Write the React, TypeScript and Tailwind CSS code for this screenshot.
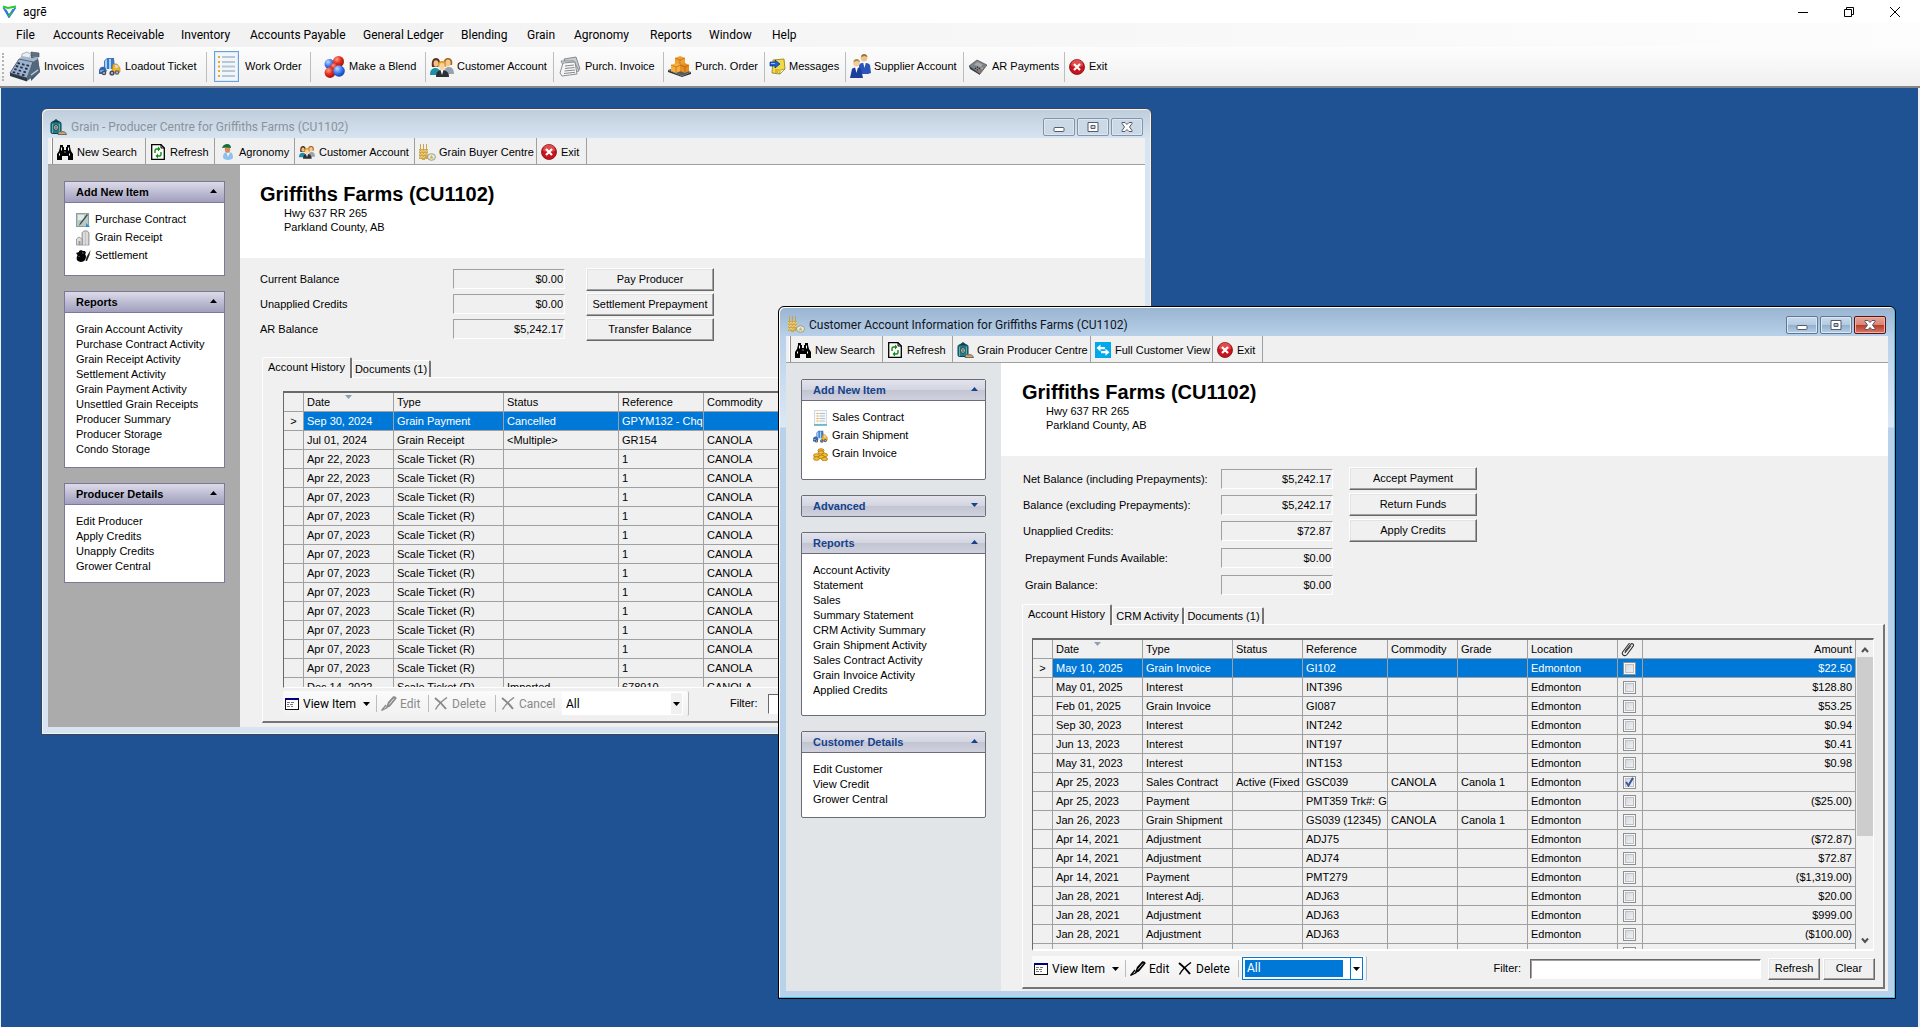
import React from "react";

type IconProps = { className?: string };

/* ---------- Icons ---------- */

function LogoIcon() {
  return (
    <svg width="15" height="13" viewBox="0 0 15 13" fill="none">
      <path d="M1.500 2.500 7 12l6.500-9.500" stroke="#2f7fe0" strokeWidth="1.800" />
      <path d="M4 4.500 7 10l4-6" stroke="#1b3fb8" strokeWidth=".8" />
      <path d="M1 1.500 6 3l8-1.500" stroke="#22d022" strokeWidth="2" />
      <path d="M6.500 11l3-3.500" stroke="#22d022" strokeWidth="1.500" />
    </svg>
  );
}

function RegisterIcon() {
  return (
    <svg width="32" height="31" viewBox="0 0 32 31">
      <path d="M22 1l8 1v4l-8-1z" fill="#5f7080" stroke="#3b4854" strokeWidth=".6" />
      <path d="M13 3l5-2 4 2-3 8-7-2z" fill="#e9eef3" stroke="#8896a3" strokeWidth=".7" />
      <path d="M22 5l7 2 2 14-9 9z" fill="#3f5568" />
      <path d="M10 8l14 3 5-3-2-2-4 1-10-2z" fill="#a4b8ca" />
      <path d="M1 22 10 8l14 3-6 16z" fill="#9db2cc" stroke="#3c4f66" strokeWidth=".8" />
      <path d="M1 22l17 5v3.500L1 25z" fill="#2c3846" />
      <path d="M18 27l6-16 5-2 2 12-13 9z" fill="#53687c" />
      <path d="M8.500 12l2.500.6M13 13.200l2.500.6M17.500 14.200l2.500.6M6.800 15l2.500.6M11.200 16.200l2.500.6M16 17.400l2.500.6M5.200 18l2.500.7M9.600 19.300l2.500.7M14.400 20.600l2.500.7M3.700 21l2.500.7M8 22.300l2.500.7M13 23.700l2.500.7" stroke="#22304c" strokeWidth="1.800" />
      <path d="M22 24l7-5" stroke="#c3d2df" strokeWidth="1.200" />
    </svg>
  );
}

function TruckIcon({ className = "w-[22px] h-[19px]" }: IconProps) {
  return (
    <svg className={className} viewBox="0 0 22 19">
      <path d="M5 4l3-3h7l1 11H5z" fill="#3a78c9" />
      <path d="M6 4l2-2v10H6zM10 2h2v10h-2z" fill="#a8d0f5" />
      <path d="M0 13c1-3 3-4 6-3l2 4-3 3H0z" fill="#3566b0" />
      <path d="M1 14h4" stroke="#bcd6f2" />
      <path d="M14 7h4l3 4v4l-5 1-3-2z" fill="#f3b229" stroke="#b47a12" strokeWidth=".6" />
      <path d="M16 8h2l1.500 2.500-3 .5z" fill="#cfe2f4" />
      <circle cx="5" cy="16" r="2.300" fill="#454f5c" />
      <circle cx="13" cy="16" r="2.600" fill="#454f5c" />
      <circle cx="18" cy="15.500" r="2.300" fill="#5a636e" />
      <circle cx="13" cy="16" r="1" fill="#c5cbd2" />
      <circle cx="5" cy="16" r=".9" fill="#c5cbd2" />
      <circle cx="18" cy="15.500" r=".9" fill="#c5cbd2" />
    </svg>
  );
}

function WorkOrderIcon() {
  return (
    <svg width="25" height="31" viewBox="0 0 25 31">
      <rect x=".5" y=".5" width="24" height="30" fill="#d9e9f9" stroke="#6f9fd8" />
      <rect x="2" y="2" width="21" height="27" fill="#f1f6fb" />
      <path d="M4 6h2M4 11h2M4 15.500h2M4 20h2M4 25h2" stroke="#f5a81c" strokeWidth="2" />
      <path d="M8 6h13M8 11h13M8 15.500h13M8 20h13M8 25h13" stroke="#b9c6d3" strokeWidth="2" />
    </svg>
  );
}

function BlendIcon() {
  return (
    <svg width="21" height="22" viewBox="0 0 21 22">
      <defs>
        <radialGradient id="ballRed" cx=".35" cy=".3" r=".8">
          <stop offset="0" stopColor="#ff9a86" />
          <stop offset=".5" stopColor="#e02a1a" />
          <stop offset="1" stopColor="#8f0d05" />
        </radialGradient>
        <radialGradient id="ballBlue" cx=".35" cy=".3" r=".8">
          <stop offset="0" stopColor="#b9dcff" />
          <stop offset=".5" stopColor="#3a78ee" />
          <stop offset="1" stopColor="#0d2fa0" />
        </radialGradient>
      </defs>
      <circle cx="5.500" cy="8" r="5" fill="url(#ballBlue)" />
      <circle cx="14.500" cy="5.500" r="5.500" fill="url(#ballRed)" />
      <circle cx="10.500" cy="11" r="4" fill="url(#ballRed)" />
      <circle cx="6" cy="16.500" r="5.400" fill="url(#ballRed)" />
      <circle cx="15" cy="15" r="5.800" fill="url(#ballBlue)" />
    </svg>
  );
}

function PeopleIcon({ className = "w-[24px] h-[20px]" }: IconProps) {
  return (
    <svg className={className} viewBox="0 0 24 20">
      <path d="M0 18c0-5 2-7 5.500-7S11 14 11 18z" fill="#1f8fa8" />
      <path d="M14 17c0-5 1.500-7 5-7s5 3 5 7z" fill="#9aa3ad" />
      <path d="M2 10C1 4 3 1 6 1s5 3 4 9z" fill="#5a3418" />
      <ellipse cx="6" cy="6.500" rx="2.400" ry="3.200" fill="#f0c090" />
      <path d="M14 8c-1-5 1-7 4-7s5 2 4 7z" fill="#a8661c" />
      <ellipse cx="18" cy="6" rx="2.600" ry="3.400" fill="#f3c898" />
      <path d="M6 20c0-5 2-7 6-7s7 2 7 7z" fill="#2b2f36" />
      <path d="M10.500 13l1.500 5 1.500-5z" fill="#fff" />
      <path d="M8 10c-1-4 1-6 4-6s5 2 4 6z" fill="#e0a030" />
      <ellipse cx="12" cy="9.500" rx="2.700" ry="3.400" fill="#f9d3a4" />
    </svg>
  );
}

function PapersIcon() {
  return (
    <svg width="22" height="21" viewBox="0 0 22 21">
      <path d="M5 3 17 1l4 12-12 5z" fill="#c9cdd0" stroke="#7d8287" strokeWidth=".9" />
      <path d="M2 5h13l5 10-12 2z" fill="#e4e6e8" stroke="#7d8287" strokeWidth=".9" />
      <path d="M4 7l12-1 2 12-15 2-2-3z" fill="#f6f6f6" stroke="#7d8287" strokeWidth=".9" />
      <path d="M6 10l9-1M6 12.500l9.500-1M5.500 15l10.500-1M5 17.500l11-1.200" stroke="#85898e" strokeWidth="1" />
    </svg>
  );
}

function BoxesIcon() {
  return (
    <svg width="24" height="21" viewBox="0 0 24 21">
      <path d="M0 14l14 6 9-4v2l-9 3L0 16z" fill="#30343a" />
      <path d="M0 14l9-3 14 5-9 4z" fill="#555b63" />
      <path d="M7 2l5-2 5 2v6l-5 2-5-2z" fill="#f0a030" />
      <path d="M7 2l5 2 5-2M12 4v6" stroke="#b96a10" strokeWidth=".7" fill="none" />
      <path d="M3 9l5-2 5 2v6l-5 2-5-2z" fill="#f6b040" />
      <path d="M3 9l5 2 5-2M8 11v6" stroke="#b96a10" strokeWidth=".7" fill="none" />
      <path d="M12 9l5-2 4 2v6l-4 2-5-2z" fill="#e88e20" />
      <path d="M12 9l5 2 4-2M17 11v6" stroke="#a85c0c" strokeWidth=".7" fill="none" />
    </svg>
  );
}

function MessageIcon() {
  return (
    <svg width="17" height="17" viewBox="0 0 17 17">
      <path d="M4 2l11-1 1 10-5 5-8-1z" fill="#f1d94a" stroke="#8a7a14" strokeWidth=".8" />
      <path d="M16 11l-5 5v-4z" fill="#fff8c0" stroke="#8a7a14" strokeWidth=".6" />
      <path d="M6 12h4M6 14h3" stroke="#9a8a20" strokeWidth=".8" />
      <path d="M1 4h5V2l5 4-5 4V8H1z" fill="#1d5ed0" stroke="#0d2f80" strokeWidth=".7" />
      <path d="M2 5.500h4" stroke="#8fc0ff" />
    </svg>
  );
}

function SuppliersIcon() {
  return (
    <svg width="21" height="25" viewBox="0 0 21 25">
      <circle cx="14" cy="4" r="3.400" fill="#e9c48f" />
      <path d="M11 3c0-4 6-4 6.500 0l-3-1z" fill="#9b7436" />
      <path d="M9 20V11c1-3 9-3 11 0l1 8-3 1z" fill="#2b55b8" />
      <path d="M13 8l1.500 6L16 8z" fill="#fff" />
      <circle cx="6.500" cy="9" r="3.400" fill="#f0cd9c" />
      <path d="M3.500 8c0-4 6-4 6.500 0l-3-1z" fill="#b08a4a" />
      <path d="M0 24l2-9c1-2 8-2 9 0l2 9z" fill="#1d3f9c" />
      <path d="M5 13l1.500 6L8 13z" fill="#fff" />
    </svg>
  );
}

function TerminalIcon() {
  return (
    <svg width="18" height="16" viewBox="0 0 18 16">
      <path d="M0 7 8 1l10 5-7 9z" fill="#7d8288" stroke="#4a4e53" strokeWidth=".7" />
      <path d="M0 7l11 8v1L1 10z" fill="#34373b" />
      <path d="M5 5.500 8.500 3l5 2.500-2 3z" fill="#a4a9ae" />
      <path d="M6 9l1 .6M8 7.800l1 .6M8 10.500l1 .6M10 9l1 .6" stroke="#2b2d30" strokeWidth="1.400" />
      <path d="M11 11.500l1 .5" stroke="#e04030" strokeWidth="1.500" />
      <path d="M12.500 9l1 .5" stroke="#f3c838" strokeWidth="1.500" />
    </svg>
  );
}

function ExitIcon() {
  return (
    <svg width="16" height="16" viewBox="0 0 16 16">
      <circle cx="8" cy="8" r="7.500" fill="#c8141c" stroke="#7f0a10" strokeWidth=".8" />
      <path d="M2 6.500a6 6 0 0 1 12 0c-3 2-9 2-12 0z" fill="#ec6a66" opacity=".65" />
      <path d="M5 5l6 6M11 5l-6 6" stroke="#fff" strokeWidth="2.200" />
    </svg>
  );
}

function BinocularsIcon() {
  return (
    <svg width="16" height="15" viewBox="0 0 16 15">
      <path d="M3 0h3v2h1v3h2V2h1V0h3v2l1 4 2 3v6h-5v-4H5v4H0V9l2-3 1-4z" fill="#000" />
      <path d="M2.500 8.500v2M12.500 8.500v2M4.500 2.500v3M11.500 2.500v3M7.500 7h1" stroke="#fff" strokeWidth="1" />
    </svg>
  );
}

function RefreshDocIcon() {
  return (
    <svg width="14" height="16" viewBox="0 0 14 16">
      <path d="M.7.7h9.300l3.300 3.300v11.300H.7z" fill="#fff" stroke="#000" strokeWidth="1.300" />
      <path d="M10 .7V4h3.300" fill="none" stroke="#000" />
      <path d="M4 9V6.500c0-1 .5-1.500 1.500-1.500H8" fill="none" stroke="#108a10" strokeWidth="1.400" />
      <path d="M7 2.500 9.500 5 7 7.500z" fill="#108a10" />
      <path d="M10 8v2.500c0 1-.5 1.500-1.500 1.500H6" fill="none" stroke="#108a10" strokeWidth="1.400" />
      <path d="M7 9.500 4.500 12 7 14.500z" fill="#108a10" />
    </svg>
  );
}

function AgronomistIcon() {
  return (
    <svg width="13" height="16" viewBox="0 0 13 16">
      <path d="M2 14c0-4 1-6 5-6s5 2 5 6c-2 2.500-8 2.500-10 0z" fill="#8fc0ee" />
      <path d="M5.500 8.500 7 13l2-4.500z" fill="#eef6ff" />
      <ellipse cx="6.500" cy="5.500" rx="2.700" ry="3.200" fill="#d98c58" />
      <path d="M1 4c1-3 3-4 5-4 3 0 4 2 4 4L6 3.500z" fill="#14703c" />
    </svg>
  );
}

function WheatIcon() {
  return (
    <svg width="17" height="17" viewBox="0 0 17 17">
      <path d="M1.500 0v15M4.500 0v15M7.500 0v15" stroke="#c9a34a" strokeWidth="1" />
      <path d="M0 5h3v10H0zM3 5h3v11H3zM6 5h3v10H6z" fill="#cfa648" />
      <path d="M0 6l1.500 2L3 6M0 9l1.500 2L3 9M0 12l1.500 2L3 12M3 6l1.500 2L6 6M3 9l1.500 2L6 9M3 12l1.500 2L6 12M6 6l1.500 2L9 6M6 9l1.500 2L9 9" stroke="#f0dc9a" strokeWidth=".8" fill="none" />
      <ellipse cx="12.500" cy="13" rx="4" ry="3.300" fill="#e6ead8" stroke="#8fa39a" strokeWidth="1" />
      <path d="M10.500 14.500 12.500 11l2 3.500z" fill="#dcae48" />
    </svg>
  );
}

function BinIcon() {
  return (
    <svg width="17" height="16" viewBox="0 0 17 16">
      <path d="M2 3l4-3 4 3v2H2z" fill="#1b4450" />
      <rect x="1" y="3" width="10" height="11.500" rx="1.500" fill="#217c8c" stroke="#0e3c46" />
      <path d="M2.500 5v9M9.500 5v9" stroke="#57b2c0" />
      <ellipse cx="6" cy="8.500" rx="2.200" ry="3" fill="#e8e0c8" stroke="#102c34" strokeWidth=".8" />
      <path d="M6 6.500v4" stroke="#102c34" strokeWidth="1" />
      <path d="M8 15c0-2 2-3 3.500-2 1.500-1 4.500 0 5 2.500H8z" fill="#c9a878" stroke="#54432c" strokeWidth=".7" />
    </svg>
  );
}

function SwapIcon() {
  return (
    <svg width="16" height="16" viewBox="0 0 16 16">
      <rect width="16" height="16" fill="#00a8ec" />
      <path d="M1.500 6 5.500 2.500V5H10v2.200H5.500v2.300z" fill="#fff" />
      <path d="M14.500 10.200 10.500 6.800v2.300H6v2.200h4.500v2.400z" fill="#fff" />
    </svg>
  );
}

function ContractIcon() {
  return (
    <svg width="14" height="15" viewBox="0 0 14 15">
      <rect x=".5" y=".5" width="12" height="13" fill="#b9cac6" stroke="#8aa09c" />
      <path d="M2 2h6v5H2z" fill="#e3ebe9" />
      <path d="M12 2 5 11l-2 2 1-3 7-9z" fill="#3c4c50" />
      <path d="M10 10l4 4h-4z" fill="#2d8fd8" />
    </svg>
  );
}

function SiloIcon() {
  return (
    <svg width="14" height="16" viewBox="0 0 14 16">
      <path d="M6 15V3c1-3 6-3 7 0v12z" fill="#c4c4c4" stroke="#8a8a8a" strokeWidth=".8" />
      <path d="M8 2v13M11 2v13" stroke="#f1f1f1" />
      <path d="M.5 15V9L3 7l3 2v6z" fill="#dedede" stroke="#8a8a8a" strokeWidth=".8" />
      <path d="M2.500 11h2v4h-2z" fill="#999" />
    </svg>
  );
}

function InkIcon() {
  return (
    <svg width="15" height="12" viewBox="0 0 15 12">
      <path d="M0 3l3-1V1l2-1 2 1h2l1 2-1 1c2 2 1 8-4 8S0 8 1.500 5z" fill="#050505" />
      <path d="M14.500 0l-1 5-2.500 6H9.500l1-4z" fill="#222" />
      <path d="M2.500 6.500h1M6 3h1.500" stroke="#999" strokeWidth=".8" />
    </svg>
  );
}

function ListIcon() {
  return (
    <svg width="13" height="16" viewBox="0 0 13 16">
      <rect x=".5" y=".5" width="12" height="14" fill="#f6f9fb" stroke="#cfdbe4" />
      <path d="M0 15h13" stroke="#58a8b8" strokeWidth="1.500" />
      <path d="M2.500 3.500h2M2.500 6h2M2.500 8.500h2M2.500 11h2" stroke="#f0a428" />
      <path d="M5.500 3.500H11M5.500 6H11M5.500 8.500H11M5.500 11H11" stroke="#b3c0cb" />
    </svg>
  );
}

function CoinsIcon() {
  return (
    <svg width="15" height="13" viewBox="0 0 15 13">
      <g fill="#f3bd30" stroke="#a8750c" strokeWidth=".8">
        <ellipse cx="8" cy="2.500" rx="3" ry="1.800" />
        <ellipse cx="8" cy="4.500" rx="3" ry="1.800" />
        <ellipse cx="3.500" cy="7.500" rx="3" ry="1.800" />
        <ellipse cx="3.500" cy="10.500" rx="3" ry="1.800" />
        <ellipse cx="11.500" cy="7" rx="3" ry="1.800" />
        <ellipse cx="8.500" cy="9" rx="3" ry="1.800" />
        <ellipse cx="11.500" cy="11" rx="3" ry="1.800" />
      </g>
    </svg>
  );
}

function ViewItemIcon() {
  return (
    <svg width="14" height="12" viewBox="0 0 14 12">
      <rect x=".5" y=".5" width="13" height="11" fill="#fff" stroke="#111" />
      <path d="M0 1h14" stroke="#00007c" strokeWidth="2" />
      <path d="M2 4.500h3M6 4.500h3M2 6.500h2M5 6.500h3M2 8.500h3M6 8.500h2" stroke="#777" />
    </svg>
  );
}

function PenIcon() {
  return (
    <svg width="16" height="15" viewBox="0 0 16 15" fill="currentColor">
      <path d="M12 .5C13.500-.3 16 1 15.500 2.500L9 10.500l-4.500 2L7 6z" />
      <path d="M5 9 .5 14.500l6-3" fill="none" stroke="currentColor" strokeWidth="1.200" />
      <path d="M8 8.500l5-6" stroke="#fff" strokeWidth=".8" />
    </svg>
  );
}

function CrossIcon() {
  return (
    <svg width="14" height="13" viewBox="0 0 14 13" fill="none" stroke="currentColor">
      <path d="M1 1c4 3 8 7 11 11" strokeWidth="2" />
      <path d="M13 .5C8 4 4 8 1.500 12.500" strokeWidth="1.400" />
    </svg>
  );
}

function ClipIcon() {
  return (
    <svg width="14" height="16" viewBox="0 0 14 16" fill="none" stroke="#333" strokeWidth="1.100">
      <path d="M4 10.500 9.500 3.500c1.500-1.800 4-.3 2.700 1.700L6 13.500c-2 2.500-6 .3-4.300-2.500L8.500 2" />
      <path d="M3.800 11.800 10 4.500" />
    </svg>
  );
}

function Triangle({ down = false, className = "" }: { down?: boolean; className?: string }) {
  return (
    <svg width="7" height="4" viewBox="0 0 7 4" className={className} fill="currentColor">
      <path d={down ? "M0 0h7L3.500 4z" : "M0 4h7L3.500 0z"} />
    </svg>
  );
}

/* ---------- Main menu and toolbar ---------- */

const menuItems = [
  { label: "File", width: "w-[37px]" },
  { label: "Accounts Receivable", width: "w-[128px]" },
  { label: "Inventory", width: "w-[69px]" },
  { label: "Accounts Payable", width: "w-[113px]" },
  { label: "General Ledger", width: "w-[98px]" },
  { label: "Blending", width: "w-[66px]" },
  { label: "Grain", width: "w-[47px]" },
  { label: "Agronomy", width: "w-[76px]" },
  { label: "Reports", width: "w-[59px]" },
  { label: "Window", width: "w-[63px]" },
  { label: "Help", width: "w-[40px]" },
];

const mainTools = [
  { label: "Invoices", icon: <RegisterIcon />, slot: "w-[38px]", width: "w-[88px]" },
  { label: "Loadout Ticket", icon: <TruckIcon />, slot: "w-[31px]", width: "w-[113px]" },
  { label: "Work Order", icon: <WorkOrderIcon />, slot: "w-[38px]", width: "w-[104px]" },
  { label: "Make a Blend", icon: <BlendIcon />, slot: "w-[38px] pl-[9px]", width: "w-[115px]" },
  { label: "Customer Account", icon: <PeopleIcon />, slot: "w-[31px]", width: "w-[128px]" },
  { label: "Purch. Invoice", icon: <PapersIcon />, slot: "w-[31px]", width: "w-[110px]" },
  { label: "Purch. Order", icon: <BoxesIcon />, slot: "w-[31px]", width: "w-[101px]" },
  { label: "Messages", icon: <MessageIcon />, slot: "w-[24px]", width: "w-[81px]" },
  { label: "Supplier Account", icon: <SuppliersIcon />, slot: "w-[28px]", width: "w-[118px]" },
  { label: "AR Payments", icon: <TerminalIcon />, slot: "w-[28px]", width: "w-[101px]" },
  { label: "Exit", icon: <ExitIcon />, slot: "w-[24px]", width: "w-[48px]", last: true },
];

function AppHeader() {
  return (
    <header className="shrink-0">
      <div className="flex h-[23px] items-center justify-between bg-white pl-[2px] font-[Roboto,sans-serif]">
        <div className="flex items-center gap-[6px]">
          <LogoIcon />
          <h1 className="text-[12px] leading-4">agrē</h1>
        </div>
        <div className="flex pr-[2px]">
          <button aria-label="Minimize" className="grid h-5 w-[46px] place-items-center">
            <svg width="10" height="10" viewBox="0 0 10 10"><path d="M0 5.500h10" stroke="#000" /></svg>
          </button>
          <button aria-label="Restore" className="grid h-5 w-[46px] place-items-center">
            <svg width="10" height="10" viewBox="0 0 10 10" fill="none" stroke="#000">
              <path d="M.5 2.500h7v7h-7zM2.500 2.500v-2h7v7h-2" />
            </svg>
          </button>
          <button aria-label="Close" className="grid h-5 w-[46px] place-items-center">
            <svg width="10" height="10" viewBox="0 0 10 10" stroke="#000"><path d="M0 0l10 10M10 0 0 10" /></svg>
          </button>
        </div>
      </div>
      <nav className="flex h-6 items-center bg-linear-to-r from-[#f0f0f0] to-[#fdfdfd] pl-4 font-[Roboto,sans-serif] text-[12px]">
        {menuItems.map((m) => (
          <button key={m.label} className={`${m.width} shrink-0 whitespace-nowrap text-left`}>
            {m.label}
          </button>
        ))}
      </nav>
      <div className="flex h-[41px] items-center border-b-2 border-[#84868a] bg-linear-to-b from-[#fdfdfd] to-[#f0f0f0] pl-[2px]">
        <div className="h-7 w-[4px] border-l-2 border-dotted border-[#b4b4b4]" />
        {mainTools.map((t) => (
          <button
            key={t.label}
            className={`${t.width} flex h-[30px] shrink-0 items-center whitespace-nowrap ${t.last ? "" : "border-r border-[#bdbdbd]"}`}
          >
            <span className={`${t.slot} flex shrink-0 justify-center`}>{t.icon}</span>
            {t.label}
          </button>
        ))}
      </div>
    </header>
  );
}

/* ---------- Child window pieces ---------- */

type Tool = { label: string; icon: React.ReactNode; width: string };

function CaptionButtons({ active }: { active: boolean }) {
  const base = "grid h-[18px] w-8 place-items-center rounded-[2px] border";
  const tone = active
    ? "border-[#5f7890] bg-[linear-gradient(#c9dbec,#b3cbe2_48%,#92aeca_50%,#b5cfe8)] shadow-[inset_0_0_0_1px_#dbe8f4]"
    : "border-[#8494a8] bg-[#cbd8e5] shadow-[inset_0_0_0_1px_#dde7f1]";
  const closeTone = active
    ? "border-[#5a1414] bg-[linear-gradient(#e5a598,#d98576_48%,#b93a22_50%,#d5796a)] shadow-[inset_0_0_0_1px_#ecb3a8]"
    : tone;
  return (
    <div className="flex gap-[2px]">
      <button aria-label="Minimize" className={`${base} ${tone}`}>
        <svg width="12" height="12" viewBox="0 0 12 12">
          <rect x="1" y="6.500" width="10" height="4" rx="1" fill="#fff" stroke="#555a68" />
        </svg>
      </button>
      <button aria-label="Maximize" className={`${base} ${tone}`}>
        <svg width="12" height="12" viewBox="0 0 12 12">
          <path d="M1 1.500h10v9H1zM4 4.500v3h4v-3z" fill="#fff" fillRule="evenodd" stroke="#555a68" />
        </svg>
      </button>
      <button aria-label="Close" className={`${base} ${closeTone}`}>
        <svg width="12" height="12" viewBox="0 0 12 12">
          <path d="M1 1.500h3l2 2 2-2h3v1L8.500 6l2.500 3.500v1H8l-2-2-2 2H1v-1L3.500 6 1 2.500z" fill="#fff" stroke="#555a68" />
        </svg>
      </button>
    </div>
  );
}

function ChildWindow(props: {
  title: string;
  icon: React.ReactNode;
  active: boolean;
  tools: Tool[];
  className: string;
  sidebar: React.ReactNode;
  sidebarClass: string;
  children: React.ReactNode;
}) {
  const { active } = props;
  return (
    <section
      className={`${props.className} absolute flex flex-col rounded-t-[6px] border pb-[7px] ${
        active
          ? "border-black bg-[linear-gradient(#99b4d1,#b9d1ea_30px,#dbe8f6_120px,#b9d1ea_121px)] px-[7px] shadow-[inset_-1px_-1px_0_#3fc4e8,inset_1px_1px_0_#fff]"
          : "border-[#3c4652] bg-[linear-gradient(#bfcddb,#d7e4f2_30px)] px-[6px] shadow-[inset_1px_1px_0_#eef4fa,inset_-1px_-1px_0_#eef4fa]"
      }`}
    >
      <div className="flex h-[29px] shrink-0 items-center justify-between pl-[2px] pr-[2px] pt-[6px] font-[Roboto,sans-serif] text-[12px]">
        <div className={`flex items-center gap-1 ${active ? "text-[#10141c]" : "text-[#8a929b]"}`}>
          {props.icon}
          <h2>{props.title}</h2>
        </div>
        <CaptionButtons active={active} />
      </div>
      <div className="flex h-[27px] shrink-0 items-center border-b border-[#a0a0a0] bg-[#f0f0f0] pl-[3px]">
        <div className="h-[26px] w-[2px] border-r border-[#8c8c8c] bg-white" />
        {props.tools.map((t) => (
          <button
            key={t.label}
            className={`${t.width} flex h-[26px] shrink-0 items-center whitespace-nowrap border-r border-[#a0a0a0] pt-[2px]`}
          >
            <span className="flex w-6 shrink-0 justify-center">{t.icon}</span>
            {t.label}
          </button>
        ))}
      </div>
      <div className="flex min-h-0 flex-1">
        <aside className={`${props.sidebarClass} flex shrink-0 flex-col gap-[15px]`}>{props.sidebar}</aside>
        <div className="flex min-w-0 flex-1 flex-col bg-[#f0f0f0]">{props.children}</div>
      </div>
    </section>
  );
}

type SideItem = { label: string; icon?: React.ReactNode };

function SideBox(props: { title: string; items?: SideItem[]; modern?: boolean; tail?: string }) {
  const { modern, items } = props;
  const withIcons = !!items && !!items[0].icon;
  return (
    <div
      className={
        modern ? "rounded-[2px] border border-[#6a6d78] bg-white" : "border border-[#7b7899] bg-white"
      }
    >
      <button
        className={`flex h-5 w-full items-center justify-between pl-[11px] pr-[7px] font-bold ${
          modern
            ? "bg-[linear-gradient(#e2e3ec,#d3d5e1_48%,#c2c4d2_50%,#cfd1de)] text-[#15428b]"
            : "bg-linear-to-b from-[#dddbe9] to-[#a19fbd] text-black"
        }`}
      >
        {props.title}
        <Triangle down={!items} className="mb-[2px]" />
      </button>
      {items && (
        <ul
          className={`${props.tail} border-t ${modern ? "border-[#6a6d78]" : "border-[#7b7899]"} ${
            withIcons ? "pt-[7px]" : "pt-[9px]"
          }`}
        >
          {items.map((it) => (
            <li key={it.label} className={withIcons ? "h-[18px]" : "h-[15px]"}>
              <a href="#" className={`flex h-full items-center ${withIcons ? "pl-2" : "pl-[11px]"}`}>
                {it.icon && <span className="flex w-[22px] shrink-0 justify-center pt-[2px] pr-[2px]">{it.icon}</span>}
                {it.label}
              </a>
            </li>
          ))}
        </ul>
      )}
    </div>
  );
}

function CustomerHeading({ className }: { className: string }) {
  return (
    <div className={`${className} h-[93px] shrink-0 bg-white pt-[17px]`}>
      <h3 className="text-[20px] font-bold leading-6">Griffiths Farms (CU1102)</h3>
      <p className="pl-6 leading-[14px]">Hwy 637 RR 265</p>
      <p className="pl-6 leading-[14px]">Parkland County, AB</p>
    </div>
  );
}

function Field(props: { id: string; label: string; value: string; labelWidth: string; indent?: boolean }) {
  return (
    <div className="flex h-5 items-center">
      <label htmlFor={props.id} className={`${props.labelWidth} ${props.indent ? "pl-[2px]" : ""}`}>
        {props.label}
      </label>
      <input
        id={props.id}
        readOnly
        defaultValue={props.value}
        className="h-5 w-28 border border-b-white border-l-[#a0a0a0] border-r-white border-t-[#a0a0a0] bg-[#f0f0f0] pr-px text-right outline-none"
      />
    </div>
  );
}

function ClassicButton({ label, className }: { label: string; className: string }) {
  return (
    <button
      className={`${className} whitespace-nowrap border border-b-[#696969] border-l-white border-r-[#696969] border-t-white bg-[#f0f0f0] text-center shadow-[inset_-1px_-1px_0_#a0a0a0,inset_1px_1px_0_#e3e3e3]`}
    >
      {label}
    </button>
  );
}

function Tabs({ tabs, className }: { tabs: { label: string; width: string }[]; className: string }) {
  return (
    <div role="tablist" className={`${className} flex shrink-0 items-end`}>
      {tabs.map((t, i) => (
        <button
          key={t.label}
          role="tab"
          aria-selected={i === 0}
          className={`${t.width} whitespace-nowrap rounded-t-[2px] border-l border-t border-r-2 border-l-white border-t-white border-r-[#757575] bg-[#f0f0f0] ${
            i === 0 ? "relative z-10 -mb-px h-[21px] pb-[2px]" : "h-[17px]"
          }`}
        >
          {t.label}
        </button>
      ))}
    </div>
  );
}

type Column = { label: string; width: string; right?: boolean; check?: boolean; sorted?: boolean };

function DataGrid({ columns, rows, className }: { columns: Column[]; rows: string[][]; className: string }) {
  const cell = "overflow-hidden whitespace-nowrap border-b border-r border-[#a0a0a0] p-0";
  return (
    <table className={`${className} table-fixed border-separate border-spacing-0`}>
      <colgroup>
        <col className="w-5" />
        {columns.map((c, i) => (
          <col key={i} className={c.width} />
        ))}
      </colgroup>
      <thead>
        <tr className="h-[19px]">
          <th aria-label="Row" className={cell} />
          {columns.map((c, i) => (
            <th
              key={i}
              scope="col"
              className={`${cell} relative font-normal leading-[18px] ${c.right ? "pr-[3px] text-right" : "pl-[3px] text-left"}`}
            >
              {c.check ? <ClipIcon /> : c.label}
              {c.sorted && <Triangle down className="absolute left-1/2 top-[2px] -ml-1 text-[#8f9fb0]" />}
            </th>
          ))}
        </tr>
      </thead>
      <tbody>
        {rows.map((r, ri) => (
          <tr key={ri} className="h-[19px]">
            <td className={`${cell} text-center leading-[18px]`}>{ri === 0 ? ">" : ""}</td>
            {columns.map((c, ci) => (
              <td
                key={ci}
                className={`${cell} leading-[18px] ${ri === 0 ? "bg-[#0078d7] text-white" : ""} ${
                  c.check ? "" : c.right ? "pr-[3px] text-right" : "pl-[3px]"
                }`}
              >
                {c.check ? (
                  <label className="relative ml-[5px] flex h-[13px] w-[13px]">
                    <input
                      type="checkbox"
                      aria-label={`Attachment for ${r[3]}`}
                      defaultChecked={r[ci] === "x"}
                      className="h-[13px] w-[13px] appearance-none border border-[#8e8f8f] bg-[linear-gradient(135deg,#cfd3d8,#f6f6f6)] shadow-[inset_0_0_0_1px_#f8f8f8,inset_0_0_0_2px_#bcc1c8]"
                    />
                    {r[ci] === "x" && (
                      <svg className="absolute left-[2px] top-[1px]" width="9" height="10" viewBox="0 0 9 10">
                        <path d="M1 5l2.500 3.500L8 .8" fill="none" stroke="#3c55a0" strokeWidth="2" />
                      </svg>
                    )}
                  </label>
                ) : (
                  r[ci]
                )}
              </td>
            ))}
          </tr>
        ))}
      </tbody>
    </table>
  );
}

function StripButton(props: { label: string; icon: React.ReactNode; width: string; disabled?: boolean; sep?: boolean }) {
  return (
    <button
      disabled={props.disabled}
      className={`${props.width} flex h-[17px] shrink-0 items-center whitespace-nowrap ${
        props.disabled ? "text-[#8a8a8a]" : "text-black"
      } ${props.sep ? "border-r border-[#bdbdbd]" : ""}`}
    >
      <span className="flex w-[23px] shrink-0 justify-center">{props.icon}</span>
      {props.label}
    </button>
  );
}

function ViewItemButton() {
  return (
    <button className="flex h-[17px] w-[94px] shrink-0 items-center whitespace-nowrap border-r border-[#bdbdbd] pl-[2px] pr-[6px]">
      <ViewItemIcon />
      <span className="pl-1">View Item</span>
      <Triangle down className="ml-auto" />
    </button>
  );
}

/* ---------- Data ---------- */

const producerColumns: Column[] = [
  { label: "Date", width: "w-[90px]", sorted: true },
  { label: "Type", width: "w-[110px]" },
  { label: "Status", width: "w-[115px]" },
  { label: "Reference", width: "w-[85px]" },
  { label: "Commodity", width: "w-[85px]" },
  { label: "Grade", width: "w-[90px]" },
  { label: "Location", width: "w-[90px]" },
  { label: "Amount", width: "", right: true },
];

const scale = (date: string) => [date, "Scale Ticket (R)", "", "1", "CANOLA", "", "", ""];

const producerRows: string[][] = [
  ["Sep 30, 2024", "Grain Payment", "Cancelled", "GPYM132 - Chq", "", "", "", ""],
  ["Jul 01, 2024", "Grain Receipt", "<Multiple>", "GR154", "CANOLA", "", "", ""],
  ...["Apr 22, 2023", "Apr 22, 2023"].map(scale),
  ...Array.from({ length: 10 }, () => scale("Apr 07, 2023")),
  ["Dec 14, 2022", "Scale Ticket (R)", "Imported", "678910", "CANOLA", "", "", ""],
];

const customerColumns: Column[] = [
  { label: "Date", width: "w-[90px]", sorted: true },
  { label: "Type", width: "w-[90px]" },
  { label: "Status", width: "w-[70px]" },
  { label: "Reference", width: "w-[85px]" },
  { label: "Commodity", width: "w-[70px]" },
  { label: "Grade", width: "w-[70px]" },
  { label: "Location", width: "w-[90px]" },
  { label: "", width: "w-[25px]", check: true },
  { label: "Amount", width: "", right: true },
];

const plain = (date: string, type: string, ref: string, amount: string) => [
  date, type, "", ref, "", "", "Edmonton", "", amount,
];

const customerRows: string[][] = [
  plain("May 10, 2025", "Grain Invoice", "GI102", "$22.50"),
  plain("May 01, 2025", "Interest", "INT396", "$128.80"),
  plain("Feb 01, 2025", "Grain Invoice", "GI087", "$53.25"),
  plain("Sep 30, 2023", "Interest", "INT242", "$0.94"),
  plain("Jun 13, 2023", "Interest", "INT197", "$0.41"),
  plain("May 31, 2023", "Interest", "INT153", "$0.98"),
  ["Apr 25, 2023", "Sales Contract", "Active (Fixed", "GSC039", "CANOLA", "Canola 1", "Edmonton", "x", ""],
  plain("Apr 25, 2023", "Payment", "PMT359 Trk#: G", "($25.00)"),
  ["Jan 26, 2023", "Grain Shipment", "", "GS039 (12345)", "CANOLA", "Canola 1", "Edmonton", "", ""],
  plain("Apr 14, 2021", "Adjustment", "ADJ75", "($72.87)"),
  plain("Apr 14, 2021", "Adjustment", "ADJ74", "$72.87"),
  plain("Apr 14, 2021", "Payment", "PMT279", "($1,319.00)"),
  plain("Jan 28, 2021", "Interest Adj.", "ADJ63", "$20.00"),
  plain("Jan 28, 2021", "Adjustment", "ADJ63", "$999.00"),
  plain("Jan 28, 2021", "Adjustment", "ADJ63", "($100.00)"),
  plain("Jan 28, 2021", "Adjustment", "ADJ63", "$500.00"),
];

const list = (...labels: string[]): SideItem[] => labels.map((label) => ({ label }));

/* ---------- Windows ---------- */

function ProducerWindow() {
  return (
    <ChildWindow
      title="Grain - Producer Centre for Griffiths Farms (CU1102)"
      icon={<BinIcon />}
      active={false}
      className="left-10 top-5 h-[627px] w-[1111px]"
      sidebarClass="w-[192px] bg-[#ababab] pl-[16px] pr-[15px] pt-4"
      tools={[
        { label: "New Search", icon: <BinocularsIcon />, width: "w-[93px]" },
        { label: "Refresh", icon: <RefreshDocIcon />, width: "w-[69px]" },
        { label: "Agronomy", icon: <AgronomistIcon />, width: "w-[80px]" },
        { label: "Customer Account", icon: <PeopleIcon className="h-[14px] w-[16px]" />, width: "w-[120px]" },
        { label: "Grain Buyer Centre", icon: <WheatIcon />, width: "w-[122px]" },
        { label: "Exit", icon: <ExitIcon />, width: "w-[50px]" },
      ]}
      sidebar={
        <>
          <SideBox
            title="Add New Item"
            tail="pb-[11px]"
            items={[
              { label: "Purchase Contract", icon: <ContractIcon /> },
              { label: "Grain Receipt", icon: <SiloIcon /> },
              { label: "Settlement", icon: <InkIcon /> },
            ]}
          />
          <SideBox
            title="Reports"
            tail="pb-[10px]"
            items={list(
              "Grain Account Activity",
              "Purchase Contract Activity",
              "Grain Receipt Activity",
              "Settlement Activity",
              "Grain Payment Activity",
              "Unsettled Grain Receipts",
              "Producer Summary",
              "Producer Storage",
              "Condo Storage",
            )}
          />
          <SideBox
            title="Producer Details"
            tail="pb-[8px]"
            items={list("Edit Producer", "Apply Credits", "Unapply Credits", "Grower Central")}
          />
        </>
      }
    >
      <CustomerHeading className="pl-5" />
      <div className="flex shrink-0 pl-5 pt-[10px]">
        <div className="flex flex-col gap-[5px] pt-px">
          <Field id="p-current" label="Current Balance" value="$0.00" labelWidth="w-[193px]" />
          <Field id="p-unapplied" label="Unapplied Credits" value="$0.00" labelWidth="w-[193px]" />
          <Field id="p-ar" label="AR Balance" value="$5,242.17" labelWidth="w-[193px]" />
        </div>
        <div className="ml-[21px] flex flex-col gap-[2px]">
          <ClassicButton label="Pay Producer" className="h-[23px] w-32" />
          <ClassicButton label="Settlement Prepayment" className="h-[23px] w-32" />
          <ClassicButton label="Transfer Balance" className="h-[23px] w-32" />
        </div>
      </div>
      <Tabs
        className="ml-[22px] mt-[16px]"
        tabs={[
          { label: "Account History", width: "w-[90px]" },
          { label: "Documents (1)", width: "w-[79px]" },
        ]}
      />
      <div className="mb-1 ml-[22px] mr-[3px] flex min-h-0 flex-1 flex-col border-b-2 border-l border-r-2 border-t border-b-[#757575] border-l-white border-r-[#757575] border-t-white pb-[5px] pl-5 pr-5 pt-[13px]">
        <div className="min-h-0 flex-1 overflow-hidden border-b border-l border-t-2 border-b-white border-l-[#696969] border-t-[#696969]">
          <DataGrid columns={producerColumns} rows={producerRows} className="w-full" />
        </div>
        <div className="mt-[3px] flex h-[25px] shrink-0 items-center font-[Roboto,sans-serif] text-[12px]">
          <div className="flex h-full items-center rounded-[2px] border-r border-[#bdbdbd] bg-linear-to-b from-[#fbfbfb] to-[#f1f1f1]">
            <ViewItemButton />
            <StripButton label="Edit" icon={<PenIcon />} width="w-[52px]" disabled sep />
            <StripButton label="Delete" icon={<CrossIcon />} width="w-[67px]" disabled sep />
            <StripButton label="Cancel" icon={<CrossIcon />} width="w-[66px]" disabled />
            <label className="relative mr-[5px] flex h-[23px] w-[121px] items-center bg-white">
              <select aria-label="Status filter" className="h-full w-full appearance-none pl-1 outline-none">
                <option>All</option>
              </select>
              <span className="pointer-events-none absolute inset-y-px right-px flex w-[11px] items-center justify-center bg-[#f0f0f0]">
                <Triangle down />
              </span>
            </label>
          </div>
          <label htmlFor="p-filter" className="ml-[41px] font-['Liberation_Sans',Arial,sans-serif] text-[11px]">
            Filter:
          </label>
          <input
            id="p-filter"
            className="ml-[10px] h-5 w-[200px] border border-b-white border-l-[#696969] border-r-white border-t-[#696969] bg-white outline-none"
          />
        </div>
      </div>
    </ChildWindow>
  );
}

function CustomerWindow() {
  return (
    <ChildWindow
      title="Customer Account Information for Griffiths Farms (CU1102)"
      icon={<WheatIcon />}
      active
      className="left-[777px] top-[218px] h-[693px] w-[1118px]"
      sidebarClass="w-[215px] bg-[#e1e5e8] pl-[15px] pr-[15px] pt-4"
      tools={[
        { label: "New Search", icon: <BinocularsIcon />, width: "w-[92px]" },
        { label: "Refresh", icon: <RefreshDocIcon />, width: "w-[70px]" },
        { label: "Grain Producer Centre", icon: <BinIcon />, width: "w-[138px]" },
        { label: "Full Customer View", icon: <SwapIcon />, width: "w-[122px]" },
        { label: "Exit", icon: <ExitIcon />, width: "w-[50px]" },
      ]}
      sidebar={
        <>
          <SideBox
            modern
            title="Add New Item"
            tail="pb-[17px]"
            items={[
              { label: "Sales Contract", icon: <ListIcon /> },
              { label: "Grain Shipment", icon: <TruckIcon className="h-[13px] w-[15px]" /> },
              { label: "Grain Invoice", icon: <CoinsIcon /> },
            ]}
          />
          <SideBox modern title="Advanced" />
          <SideBox
            modern
            title="Reports"
            tail="pb-[17px]"
            items={list(
              "Account Activity",
              "Statement",
              "Sales",
              "Summary Statement",
              "CRM Activity Summary",
              "Grain Shipment Activity",
              "Sales Contract Activity",
              "Grain Invoice Activity",
              "Applied Credits",
            )}
          />
          <SideBox
            modern
            title="Customer Details"
            tail="pb-[10px]"
            items={list("Edit Customer", "View Credit", "Grower Central")}
          />
        </>
      }
    >
      <CustomerHeading className="pl-[21px]" />
      <div className="flex shrink-0 pl-[22px] pt-[11px]">
        <div className="flex flex-col gap-[6px] pt-[2px]">
          <Field id="c-net" label="Net Balance (including Prepayments):" value="$5,242.17" labelWidth="w-[198px]" />
          <Field id="c-bal" label="Balance (excluding Prepayments):" value="$5,242.17" labelWidth="w-[198px]" />
          <Field id="c-unapplied" label="Unapplied Credits:" value="$72.87" labelWidth="w-[198px]" />
          <div className="flex flex-col gap-[7px] pt-px">
            <Field id="c-prepay" label="Prepayment Funds Available:" value="$0.00" labelWidth="w-[198px]" indent />
            <Field id="c-grain" label="Grain Balance:" value="$0.00" labelWidth="w-[198px]" indent />
          </div>
        </div>
        <div className="ml-[16px] flex flex-col gap-[3px]">
          <ClassicButton label="Accept Payment" className="h-[23px] w-32" />
          <ClassicButton label="Return Funds" className="h-[23px] w-32" />
          <ClassicButton label="Apply Credits" className="h-[23px] w-32" />
        </div>
      </div>
      <Tabs
        className="ml-[21px] mt-[9px]"
        tabs={[
          { label: "Account History", width: "w-[90px]" },
          { label: "CRM Activity", width: "w-[72px]" },
          { label: "Documents (1)", width: "w-[80px]" },
        ]}
      />
      <div className="mb-[2px] ml-[21px] mr-[3px] flex min-h-0 flex-1 flex-col border-b-2 border-l border-r-2 border-t border-b-[#757575] border-l-white border-r-[#757575] border-t-white pb-[6px] pl-[9px] pr-[9px] pt-[13px]">
        <div className="flex min-h-0 flex-1 overflow-hidden border-b-2 border-l border-r border-t-2 border-b-white border-l-[#696969] border-r-white border-t-[#696969]">
          <div className="min-w-0 flex-1">
            <DataGrid columns={customerColumns} rows={customerRows} className="w-full" />
          </div>
          <div className="flex w-[17px] shrink-0 flex-col items-center pl-px">
            <svg className="h-[17px] shrink-0 pt-[3px]" width="8" height="14" viewBox="0 0 8 14" fill="none" stroke="#505050" strokeWidth="2">
              <path d="M1 9l3-3.500L7 9" />
            </svg>
            <div className="h-[179px] w-full shrink-0 bg-[#cdcdcd]" />
            <div className="flex-1" />
            <svg className="h-[17px] shrink-0" width="8" height="14" viewBox="0 0 8 14" fill="none" stroke="#505050" strokeWidth="2">
              <path d="M1 5l3 3.500L7 5" />
            </svg>
          </div>
        </div>
        <div className="mt-[5px] flex h-[25px] shrink-0 items-center">
          <div className="flex h-full shrink-0 items-center rounded-[2px] border-r border-[#bdbdbd] bg-linear-to-b from-[#fbfbfb] to-[#f1f1f1] font-[Roboto,sans-serif] text-[12px]">
            <ViewItemButton />
            <StripButton label="Edit" icon={<PenIcon />} width="w-[47px]" />
            <StripButton label="Delete" icon={<CrossIcon />} width="w-[66px]" sep />
            <label className="ml-[3px] mr-[3px] flex h-[23px] w-[121px] border border-[#0078d7] bg-white">
              <select
                aria-label="Type filter"
                className="m-[2px] h-[17px] w-[98px] appearance-none bg-[#0078d7] pl-[2px] leading-[17px] text-white outline-none"
              >
                <option>All</option>
              </select>
              <span className="pointer-events-none ml-auto flex w-3 items-center justify-center border-l border-[#0078d7] bg-white">
                <Triangle down />
              </span>
            </label>
          </div>
          <label htmlFor="c-filter" className="ml-auto">Filter:</label>
          <input
            id="c-filter"
            className="ml-[9px] h-5 w-[231px] border border-b-white border-l-[#696969] border-r-white border-t-[#696969] bg-white shadow-[inset_1px_1px_0_#a0a0a0] outline-none"
          />
          <div className="-mr-px ml-[7px] flex gap-[3px]">
            <ClassicButton label="Refresh" className="h-[22px] w-[52px]" />
            <ClassicButton label="Clear" className="h-[22px] w-[52px]" />
          </div>
        </div>
      </div>
    </ChildWindow>
  );
}

export default function App() {
  return (
    <div className="flex h-screen flex-col overflow-hidden bg-[#f0f0f0] font-['Liberation_Sans',Arial,sans-serif] text-[11px] text-black">
      <AppHeader />
      <main className="relative ml-px mr-[2px] flex-1 overflow-hidden bg-[#1f5293]">
        <ProducerWindow />
        <CustomerWindow />
      </main>
    </div>
  );
}
